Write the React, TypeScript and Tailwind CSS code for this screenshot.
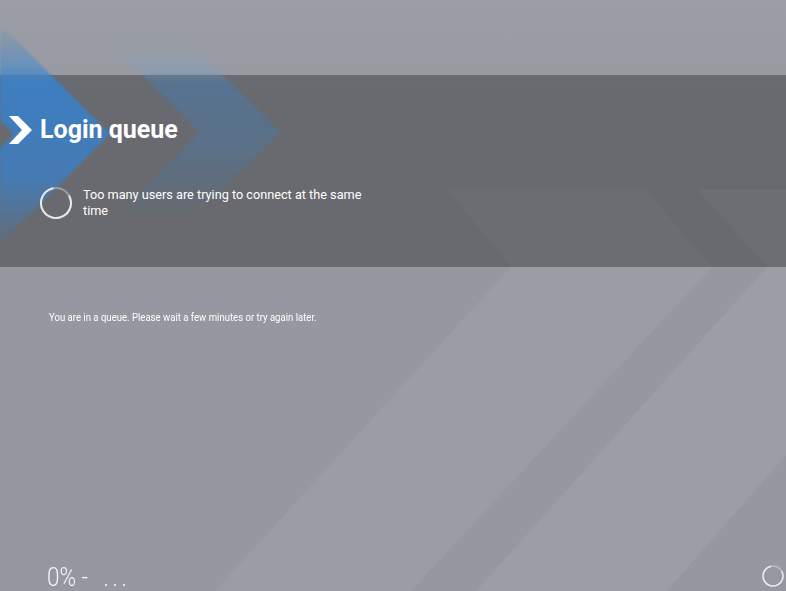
import React from 'react'

function Spinner({ size, r, stroke }: { size: number; r: number; stroke: number }) {
  const c = size / 2
  const len = 2 * Math.PI * r
  return (
    <svg width={size} height={size} viewBox={`0 0 ${size} ${size}`} className="shrink-0">
      <circle cx={c} cy={c} r={r} fill="none" stroke="rgba(255,255,255,0.35)" strokeWidth={stroke} />
      <circle
        cx={c}
        cy={c}
        r={r}
        fill="none"
        stroke="rgba(240,240,242,0.9)"
        strokeWidth={stroke}
        strokeDasharray={`${len * 0.8} ${len}`}
        transform={`rotate(-30 ${c} ${c})`}
      />
    </svg>
  )
}

// faint chevrons behind everything
function Backdrop() {
  return (
    <svg className="absolute inset-0 -z-10" width="786" height="591" viewBox="0 0 786 591">
      <defs>
        <linearGradient id="top" x1="0" y1="0" x2="0" y2="1">
          <stop offset="0" stopColor="#9b9ea4" />
          <stop offset="1" stopColor="#9598a0" />
        </linearGradient>
      </defs>
      <rect width="786" height="120" fill="url(#top)" />
      <polygon points="447,189 645,189 712,267 411,591 215,591 511,267" fill="rgba(255,255,255,0.05)" />
      <polygon points="697,189 786,189 786,455 667,591 476,591 767,267" fill="rgba(255,255,255,0.06)" />
    </svg>
  )
}

// blue arrows drifting out of the top-left corner
function BlueArrows() {
  return (
    <svg className="absolute inset-0 z-0 pointer-events-none" width="786" height="591" viewBox="0 0 786 591">
      <defs>
        <linearGradient id="b1" x1="0" y1="0" x2="0" y2="591" gradientUnits="userSpaceOnUse">
          <stop offset="0.04" stopColor="#3f86cc" stopOpacity="0" />
          <stop offset="0.11" stopColor="#4b8cca" stopOpacity="0.6" />
          <stop offset="0.14" stopColor="#3682d0" stopOpacity="0.85" />
          <stop offset="0.3" stopColor="#3682d0" stopOpacity="0.7" />
          <stop offset="0.43" stopColor="#3682d0" stopOpacity="0" />
        </linearGradient>
        <linearGradient id="b2" x1="0" y1="0" x2="0" y2="591" gradientUnits="userSpaceOnUse">
          <stop offset="0.07" stopColor="#7aa4cc" stopOpacity="0" />
          <stop offset="0.12" stopColor="#7aa4cc" stopOpacity="0.3" />
          <stop offset="0.14" stopColor="#3f7fbd" stopOpacity="0.42" />
          <stop offset="0.25" stopColor="#3f7fbd" stopOpacity="0.32" />
          <stop offset="0.37" stopColor="#3f7fbd" stopOpacity="0" />
        </linearGradient>
        <filter id="soft">
          <feGaussianBlur stdDeviation="1.2" />
        </filter>
      </defs>
      <g filter="url(#soft)">
        <polygon points="0,24 110,134 0,244 0,148 14,134 0,120" fill="url(#b1)" />
        <polygon points="108,40 188,40 280,132 190,222 110,222 200,132" fill="url(#b2)" />
      </g>
    </svg>
  )
}

export default function App() {
  return (
    <div
      className="relative isolate flex h-[591px] w-full flex-col overflow-hidden bg-[#9598a0] text-white"
      style={{ fontFamily: 'Roboto, "Noto Sans", sans-serif' }}
    >
      <Backdrop />
      <BlueArrows />

      <div className="mt-[75px] h-[192px] shrink-0 bg-black/30 pt-[41px]">
        <div className="relative z-10 flex h-[28px] items-center gap-[8px] pl-[9px]">
          <svg width="23" height="28" viewBox="0 0 23 28">
            <polygon points="0,0 9,0 23,14 9,28 0,28 13,14" fill="#fff" />
          </svg>
          <h1 className="text-[25px] font-bold leading-[28px]">Login queue</h1>
        </div>
        <div className="relative z-10 mt-[43px] flex h-[32px] items-center gap-[11px] pl-[40px]">
          <Spinner size={32} r={15} stroke={2} />
          <p className="w-[300px] text-[12.7px] leading-[16px]">
            Too many users are trying to connect at the same time
          </p>
        </div>
      </div>

      <p className="relative z-10 mt-[44px] pl-[49px] text-[11px] leading-[13px]">
        <span className="inline-block origin-left scale-x-[0.87] whitespace-nowrap">
          You are in a queue. Please wait a few minutes or try again later.
        </span>
      </p>

      <div className="relative z-10 mt-auto flex h-[26px] items-end justify-between pl-[47px] pr-[2px]">
        <span className="inline-block origin-left scale-x-[0.9] whitespace-nowrap text-[25px] font-light leading-[26px] text-[#f4f4f5]">
          0% - <span className="ml-[11px] tracking-[4px]">...</span>
        </span>
        <div className="mb-[4px]">
          <Spinner size={22} r={10} stroke={1.5} />
        </div>
      </div>
    </div>
  )
}
